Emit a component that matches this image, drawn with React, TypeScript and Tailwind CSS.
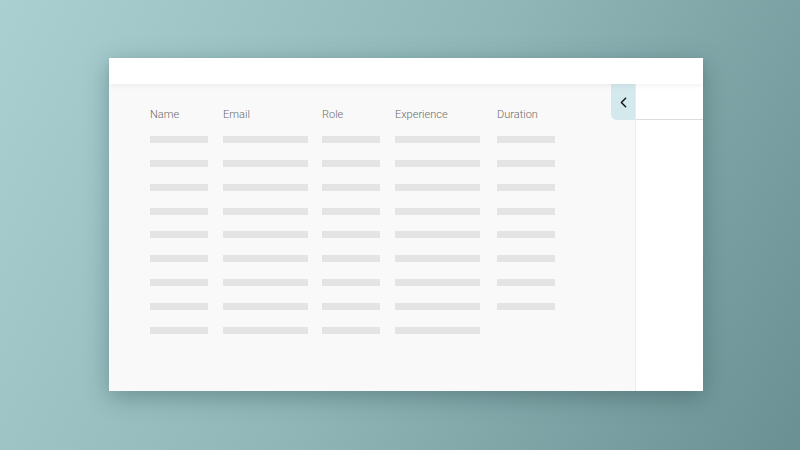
import { ChevronLeft } from "lucide-react"

const columns = [
  { label: "Name", bar: "w-[58px]" },
  { label: "Email", bar: "w-[85px]" },
  { label: "Role", bar: "w-[58px]" },
  { label: "Experience", bar: "w-[85px]" },
  { label: "Duration", bar: "w-[58px]" },
]

const ROWS = 9

export default function App() {
  return (
    <div
      className="w-[800px] h-[450px] overflow-hidden bg-linear-[118deg] from-[#aad0d2] via-[#90b6b8] to-[#6b9093] pl-[109px] pt-[58px]"
      style={{ fontFamily: "Roboto, 'Liberation Sans', sans-serif" }}
    >
      <div className="w-[594px] h-[333px] flex flex-col bg-white shadow-[0_6px_22px_rgba(30,60,62,0.35)]">
        {/* Header */}
        <div className="h-[26px] bg-white shadow-[0_2px_5px_rgba(0,0,0,0.05)] relative z-10" />

        <div className="flex flex-1 min-h-0">
          {/* Main table area */}
          <div className="w-[526px] bg-[#f9f9f9] pl-[41px] pt-[24px]">
            <div className="grid grid-cols-[73px_99px_73px_102px_58px] gap-y-[16.875px]">
              {columns.map((c) => (
                <div key={c.label} className="text-[11px] font-light leading-[14px] text-[#6a6a6a] mb-[-3px]">
                  {c.label}
                </div>
              ))}
              {Array.from({ length: ROWS }).map((_, r) =>
                columns.map((c, i) => (
                  <div key={`${r}-${i}`} className="h-[7px]">
                    {!(r === ROWS - 1 && i === 4) && (
                      <div className={`h-[7px] ${c.bar} bg-[#e4e4e4]`} />
                    )}
                  </div>
                ))
              )}
            </div>
          </div>

          {/* Side panel */}
          <div className="flex-1 bg-white border-l border-[#ececec] relative">
            <div className="h-[36px] border-b border-[#dcdcdc]" />
            <button className="absolute left-[-25px] top-0 w-[24px] h-[36px] bg-[#d3e9ec] rounded-bl-[6px] flex items-center justify-center">
              <ChevronLeft className="w-[17px] h-[17px] text-[#111]" strokeWidth={2} />
            </button>
          </div>
        </div>
      </div>
    </div>
  )
}
